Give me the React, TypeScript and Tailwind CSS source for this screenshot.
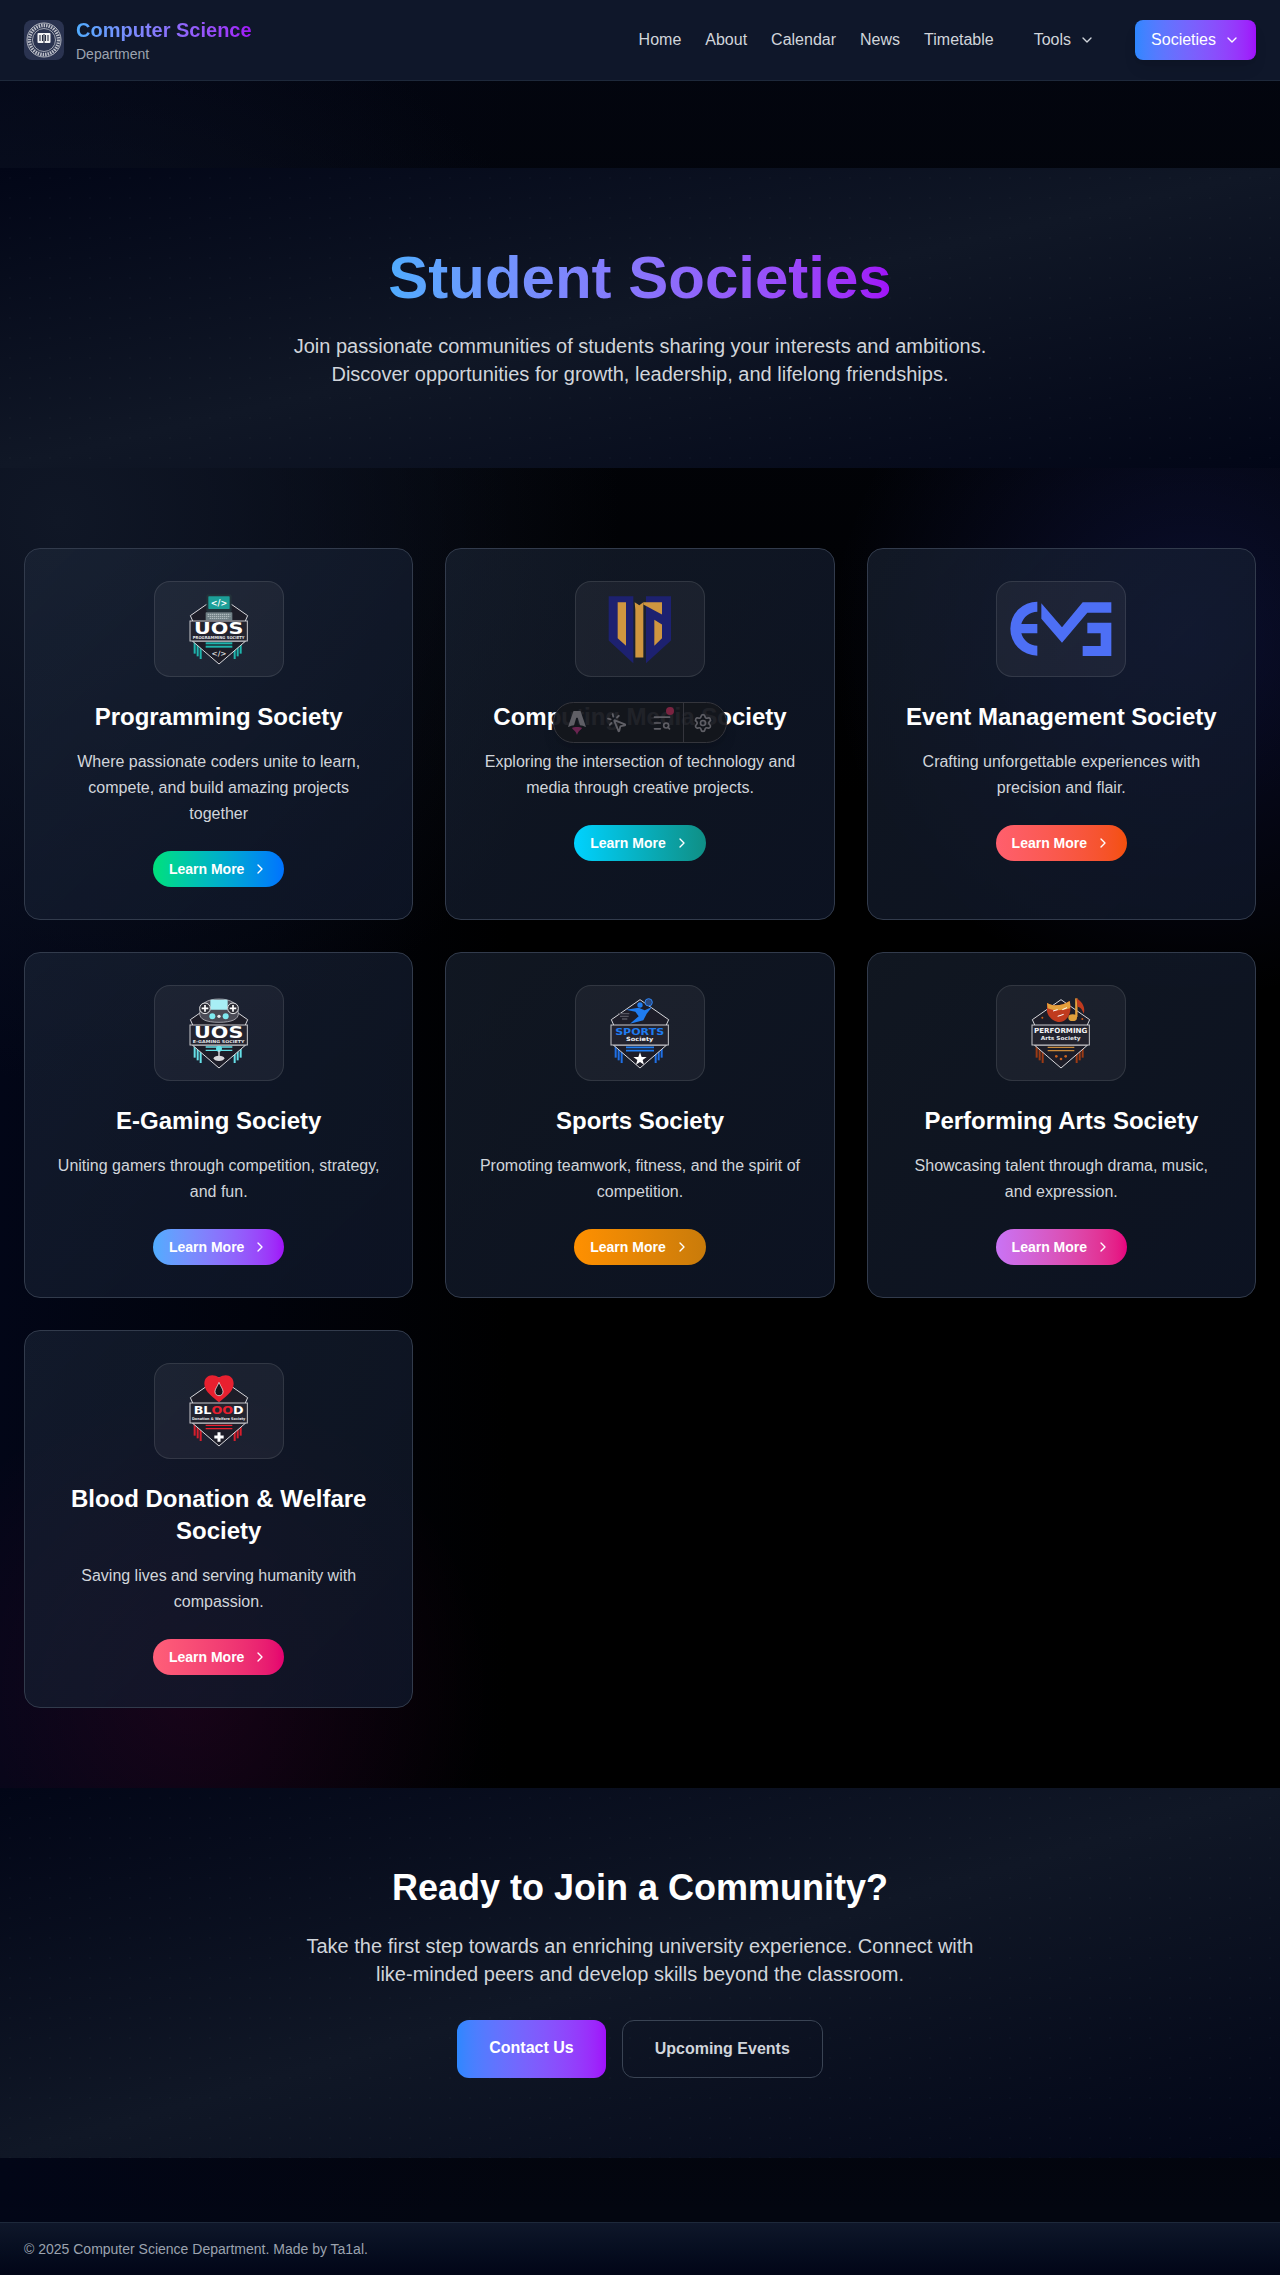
import type { ReactNode } from 'react'
import { ChevronDown, ChevronRight, MousePointerClick, TextSearch, Settings } from 'lucide-react'

// shared crest used by most society logos, drawn on a 180x216 grid
function Crest({ accent, top, banner, lower }: { accent: string; top: ReactNode; banner: ReactNode; lower: ReactNode }) {
  return (
    <svg width="60" height="72" viewBox="0 0 180 216" fontFamily="'DejaVu Sans', sans-serif">
      {[14, 23, 32].map((x, i) => (
        <g key={x}>
          <rect x={x} y="146" width="6" height={36 + i * 8} fill={accent} />
          <rect x={172 - x - 6} y="146" width="6" height={36 + i * 8} fill={accent} />
        </g>
      ))}
      <path d="M4 68 L90 8 L176 68 L168 86 H12 Z" fill="#1d1d28" stroke="#d8d8dc" strokeWidth="3" strokeLinejoin="round" />
      <path d="M10 144 H170 L90 213 Z" fill="#1d1d28" stroke="#d8d8dc" strokeWidth="3" strokeLinejoin="round" />
      {top}
      <rect x="3" y="84" width="172" height="60" fill="#23232e" stroke="#c8c8cc" strokeWidth="3" />
      {banner}
      {lower}
    </svg>
  )
}

function UosBanner({ label }: { label: string }) {
  return (
    <>
      <text x="89" y="124" textAnchor="middle" fontSize="48" fontWeight="700" textLength="148" lengthAdjust="spacingAndGlyphs" fill="#fff">UOS</text>
      <text x="89" y="139" textAnchor="middle" fontSize="12" fontWeight="700" textLength="155" lengthAdjust="spacingAndGlyphs" fill="#e5e7eb">{label}</text>
    </>
  )
}

function ProgrammingLogo() {
  return (
    <Crest
      accent="#1fb5ad"
      top={
        <>
          <rect x="52" y="4" width="76" height="54" rx="6" fill="#23323a" />
          <rect x="58" y="10" width="64" height="38" rx="2" fill="#1c9f98" />
          <text x="90" y="38" textAnchor="middle" fontSize="24" fontWeight="700" fill="#fff">{'</>'}</text>
          <rect x="50" y="58" width="80" height="24" rx="2" fill="#6f7f85" />
          <path d="M56 64 H124 M56 70 H124 M62 76 H118" stroke="#bcc7ca" strokeWidth="3" strokeDasharray="4 2" />
        </>
      }
      banner={<UosBanner label="PROGRAMMING SOCIETY" />}
      lower={
        <>
          <rect x="50" y="148" width="80" height="6" fill="#1fb5ad" />
          <rect x="50" y="158" width="80" height="6" fill="#1fb5ad" />
          <text x="90" y="190" textAnchor="middle" fontSize="22" fontWeight="700" fill="#d8d8dc">{'</>'}</text>
        </>
      }
    />
  )
}

function GamingLogo() {
  return (
    <Crest
      accent="#66e0e8"
      top={
        <>
          <path d="M32 50 C32 18 56 6 90 6 C124 6 148 18 148 50 C148 66 130 76 90 76 C50 76 32 66 32 50 Z" fill="#4a4a55" stroke="#cfcfd4" strokeWidth="2" />
          <rect x="64" y="8" width="52" height="30" rx="3" fill="#a8eef5" />
          <circle cx="48" cy="34" r="16" fill="#2a2a33" stroke="#e8e8ea" strokeWidth="3" />
          <circle cx="132" cy="34" r="16" fill="#2a2a33" stroke="#e8e8ea" strokeWidth="3" />
          <path d="M38 34 H58 M48 24 V44 M122 34 H142 M132 24 V44" stroke="#fff" strokeWidth="5" />
          <circle cx="70" cy="58" r="9" fill="#7fe9f0" />
          <circle cx="110" cy="58" r="9" fill="#7fe9f0" />
          <circle cx="90" cy="58" r="5" fill="#e8e8ea" />
        </>
      }
      banner={<UosBanner label="E-GAMING SOCIETY" />}
      lower={
        <>
          <path d="M50 150 H130 M50 160 H130" stroke="#66e0e8" strokeWidth="4" />
          <circle cx="90" cy="155" r="9" fill="#66e0e8" />
          <rect x="88" y="160" width="4" height="20" fill="#e8e8ea" />
          <ellipse cx="90" cy="184" rx="16" ry="8" fill="#d8d8dc" />
        </>
      }
    />
  )
}

function SportsLogo() {
  return (
    <Crest
      accent="#1f6fe5"
      top={
        <>
          <path d="M48 38 L86 32 L104 40 L126 30 L110 50 L100 70 L60 80 L86 58 L76 44 Z" fill="#1f7cf0" />
          <circle cx="90" cy="24" r="8" fill="#1f7cf0" />
          <circle cx="116" cy="16" r="11" fill="#2a4a80" stroke="#2f85f5" strokeWidth="3" />
          <path d="M24 50 H58 M30 58 H56 M36 66 H52" stroke="#55555f" strokeWidth="4" />
        </>
      }
      banner={
        <>
          <text x="89" y="114" textAnchor="middle" fontSize="28" fontWeight="700" textLength="147" lengthAdjust="spacingAndGlyphs" fill="#1f7cf0">SPORTS</text>
          <text x="89" y="133" textAnchor="middle" fontSize="17" fontWeight="700" textLength="82" lengthAdjust="spacingAndGlyphs" fill="#f3f4f6">Society</text>
        </>
      }
      lower={
        <>
          <path d="M48 151 H132 M48 161 H132" stroke="#1f7cf0" strokeWidth="5" />
          <path d="M90 166 L95 180 L110 180 L98 189 L102 203 L90 195 L78 203 L82 189 L70 180 L85 180 Z" fill="#fff" />
        </>
      }
    />
  )
}

function PerformingLogo() {
  return (
    <Crest
      accent="#9c3a14"
      top={
        <>
          <path d="M48 18 C68 30 96 26 116 12 C122 36 118 60 98 72 C78 82 54 66 48 44 Z" fill="#c03a1e" />
          <path d="M48 18 C68 30 96 26 116 12 C118 20 118 28 117 34 C94 42 66 42 50 34 Z" fill="#e3a03c" />
          <path d="M66 42 L80 38 M94 38 L108 32 M80 58 L98 52" stroke="#fff" strokeWidth="3" />
          <path d="M136 4 V60" stroke="#e3a03c" strokeWidth="7" />
          <ellipse cx="125" cy="62" rx="13" ry="10" fill="#e0a03c" />
          <path d="M136 4 C156 14 164 36 158 50 C154 38 148 30 140 30 Z" fill="#c03a1e" />
          <circle cx="34" cy="62" r="3" fill="#c9601e" />
          <circle cx="154" cy="66" r="3" fill="#c9601e" />
        </>
      }
      banner={
        <>
          <text x="89" y="108" textAnchor="middle" fontSize="21" fontWeight="700" textLength="160" lengthAdjust="spacingAndGlyphs" fill="#f3f4f6">PERFORMING</text>
          <text x="89" y="130" textAnchor="middle" fontSize="16" fontWeight="700" textLength="120" lengthAdjust="spacingAndGlyphs" fill="#e5e7eb">Arts Society</text>
        </>
      }
      lower={
        <>
          <path d="M50 151 H130 M50 161 H130" stroke="#c98a3a" strokeWidth="4" />
          <circle cx="76" cy="178" r="4" fill="#c9601e" />
          <circle cx="104" cy="178" r="4" fill="#c9601e" />
          <circle cx="90" cy="186" r="4" fill="#c9601e" />
        </>
      }
    />
  )
}

function BloodLogo() {
  return (
    <Crest
      accent="#d81e2c"
      top={
        <>
          <path d="M90 8 C70 -6 46 2 46 26 C46 52 76 68 90 82 C104 68 134 52 134 26 C134 2 110 -6 90 8 Z" fill="#e8202f" />
          <path d="M90 22 C84 36 78 42 78 50 C78 58 84 62 90 62 C96 62 102 58 102 50 C102 42 96 36 90 22 Z" fill="#15151c" stroke="#fff" strokeWidth="2" />
        </>
      }
      banner={
        <>
          <text x="89" y="117" textAnchor="middle" fontSize="34" fontWeight="700" textLength="150" lengthAdjust="spacingAndGlyphs" fill="#fff">
            BL<tspan fill="#e8202f">OO</tspan>D
          </text>
          <text x="89" y="135" textAnchor="middle" fontSize="11" fontWeight="700" textLength="160" lengthAdjust="spacingAndGlyphs" fill="#e5e7eb">Donation &amp; Welfare Society</text>
        </>
      }
      lower={
        <>
          <path d="M50 151 H130 M50 161 H130" stroke="#e8202f" strokeWidth="4" />
          <path d="M90 172 V200 M76 186 H104" stroke="#fff" strokeWidth="9" />
        </>
      }
    />
  )
}

function MediaLogo() {
  return (
    <svg width="64" height="69" viewBox="326 76 192 206">
      <path d="M328 79 H402 V280 L328 212 Z M440 79 H515 V212 L440 280 Z" fill="#1d2170" />
      <path d="M355 97 H380 V228 L355 205 Z" fill="#cf9640" />
      <path d="M406 97 L420 106 L432 97 V263 H408 V120 Z" fill="#cf9640" />
      <path d="M432 97 H488 V134 L432 104 Z" fill="#cf9640" />
      <path d="M465 150 L488 164 V205 L465 228 Z" fill="#cf9640" />
    </svg>
  )
}

function EventLogo() {
  return (
    <svg width="102" height="56" viewBox="88 93 306 168" fill="#4d6ff5">
      <path d="M170 95 A81 81 0 0 0 170 257 V227 A50 50 0 0 1 122 190 H170 V162 H122 A50 50 0 0 1 170 125 Z" />
      <path d="M182 100 L244 172 L306 97 H392 V128 H320 L244 218 L182 146 Z" />
      <path d="M320 158 H392 V258 H306 V228 H360 V190 H320 Z" />
    </svg>
  )
}

function DeptSeal() {
  return (
    <div className="flex h-10 w-10 items-center justify-center rounded-lg bg-[#2a3350]">
      <svg width="36" height="36" viewBox="0 0 36 36" fill="none">
        <circle cx="18" cy="18" r="17" stroke="#d6d8dd" strokeWidth="0.8" />
        <circle cx="18" cy="18" r="14.5" stroke="#e2e3e7" strokeWidth="3.4" strokeDasharray="1.5 1" opacity="0.8" />
        <circle cx="18" cy="18" r="11.5" stroke="#d6d8dd" strokeWidth="0.7" />
        <rect x="11.5" y="11" width="13" height="10" rx="1" fill="#f3f4f6" />
        <path d="M14 13 V19 M16.5 13 V19 M18 12 V21 M19.5 13 V19 M22 13 V19" stroke="#252b40" strokeWidth="1.1" />
      </svg>
    </div>
  )
}

type Society = { name: string; text: string; logo: ReactNode; btn: string }

const societies: Society[] = [
  { name: 'Programming Society', text: 'Where passionate coders unite to learn, compete, and build amazing projects together', logo: <ProgrammingLogo />, btn: 'from-[#00e07a] to-[#0072ff]' },
  { name: 'Computing Media Society', text: 'Exploring the intersection of technology and media through creative projects.', logo: <MediaLogo />, btn: 'from-[#00d2ff] to-[#0f8f85]' },
  { name: 'Event Management Society', text: 'Crafting unforgettable experiences with precision and flair.', logo: <EventLogo />, btn: 'from-[#ff5f6d] to-[#f4500b]' },
  { name: 'E-Gaming Society', text: 'Uniting gamers through competition, strategy, and fun.', logo: <GamingLogo />, btn: 'from-[#4facfe] to-[#a00ff8]' },
  { name: 'Sports Society', text: 'Promoting teamwork, fitness, and the spirit of competition.', logo: <SportsLogo />, btn: 'from-[#ff9000] to-[#c97b0a]' },
  { name: 'Performing Arts Society', text: 'Showcasing talent through drama, music, and expression.', logo: <PerformingLogo />, btn: 'from-[#c973f5] to-[#e6007e]' },
  { name: 'Blood Donation & Welfare Society', text: 'Saving lives and serving humanity with compassion.', logo: <BloodLogo />, btn: 'from-[#ff5f78] to-[#e5006f]' },
]

function SocietyCard({ s }: { s: Society }) {
  return (
    <div className="flex flex-col items-center rounded-2xl border border-[#323b4c] bg-linear-to-br from-[#1e293b]/55 to-[#0f172a]/80 p-8 text-center">
      <div className="mb-6 flex h-24 w-[130px] items-center justify-center rounded-2xl border border-white/10 bg-white/5">
        {s.logo}
      </div>
      <h3 className="mb-4 text-2xl font-bold text-white">{s.name}</h3>
      <p className="mb-6 leading-[26px] text-[#d1d5db]">{s.text}</p>
      <a className={`flex h-9 items-center gap-2 rounded-full bg-linear-to-r px-4 text-sm font-bold text-white ${s.btn}`}>
        Learn More
        <ChevronRight size={16} />
      </a>
    </div>
  )
}

function AstroMark() {
  return (
    <svg width="20" height="26" viewBox="0 0 20 26">
      <path d="M6.5 1 H13.5 L19 17 C17 16 14.5 15.4 13 15.2 L10.8 8 C10.6 7.5 9.4 7.5 9.2 8 L7 15.2 C5.5 15.4 3 16 1 17 Z" fill="#5f5f66" />
      <path d="M5 18 C7 16.8 13 16.8 15 18 C14 20 11 21 10 25 C9 21 6 20 5 18 Z" fill="#6a2450" />
    </svg>
  )
}

// the dev toolbar pill that floats over the second card
function DevToolbar() {
  return (
    <div className="absolute left-1/2 top-[702px] flex h-[41px] w-[174px] -translate-x-1/2 items-center rounded-full border border-[#34353c] bg-[#14161c]/95 text-[#5f5f66] shadow-lg">
      <div className="flex flex-1 items-center pl-[13px]">
        <AstroMark />
        <MousePointerClick size={22} className="ml-[19px]" />
        <div className="relative ml-[24px]">
          <TextSearch size={20} />
          <span className="absolute -right-0.5 -top-1.5 h-2 w-2 rounded-full bg-[#7a2340]" />
        </div>
      </div>
      <div className="flex h-full w-[43px] items-center justify-center border-l border-[#34353c] pr-1">
        <Settings size={20} />
      </div>
    </div>
  )
}

function Banner({ children }: { children: ReactNode }) {
  return (
    <section className="bg-[radial-gradient(rgba(255,255,255,0.015)_1px,transparent_1px),linear-gradient(to_bottom_right,#020617_0%,#101726_50%,#020617_100%)] bg-[size:20px_20px,100%_100%] py-20 text-center">
      {children}
    </section>
  )
}

export default function App() {
  return (
    <div className="relative min-h-[2275px] bg-[radial-gradient(circle_at_1190px_640px,rgba(60,80,255,0.17),transparent_360px),radial-gradient(circle_at_190px_1690px,rgba(255,0,128,0.09),transparent_300px),radial-gradient(circle_at_60px_520px,#101726,transparent_560px),linear-gradient(90deg,#020617,transparent_40%),linear-gradient(180deg,#030610_0%,#000_35%,#000_80%,#030610_97%)] [font-family:'Liberation_Sans',Arial,sans-serif]">
      <header className="flex h-[81px] items-center justify-between border-b border-[#1e293b] bg-[#0f172a] px-6">
        <div className="flex items-center gap-3">
          <DeptSeal />
          <div>
            <div className="bg-linear-to-r from-[#4facfe] to-[#a00ff8] bg-clip-text text-xl leading-7 font-bold text-transparent">Computer Science</div>
            <div className="text-sm leading-5 text-[#9ca3af]">Department</div>
          </div>
        </div>
        <nav className="flex items-center gap-6 text-[#d1d5db]">
          <a>Home</a>
          <a>About</a>
          <a>Calendar</a>
          <a>News</a>
          <a>Timetable</a>
          <button className="flex items-center gap-2 px-4 py-2">
            Tools <ChevronDown size={16} />
          </button>
          <button className="flex h-10 items-center gap-2 rounded-lg bg-linear-to-r from-[#2d87ff] to-[#a00ffa] px-4 text-white shadow-lg">
            Societies <ChevronDown size={16} />
          </button>
        </nav>
      </header>

      <main className="pt-[87px]">
        <Banner>
          <h1 className="mx-auto mb-6 w-fit bg-linear-to-r from-[#4facfe] to-[#a00ff8] bg-clip-text text-6xl font-bold text-transparent">Student Societies</h1>
          <p className="mx-auto max-w-3xl text-xl text-[#d1d5db]">
            Join passionate communities of students sharing your interests and ambitions. Discover opportunities for growth, leadership, and lifelong friendships.
          </p>
        </Banner>

        <section className="grid grid-cols-3 gap-8 px-6 py-20">
          {societies.map(s => <SocietyCard key={s.name} s={s} />)}
        </section>

        <Banner>
          <h2 className="mb-6 text-4xl font-bold text-white">Ready to Join a Community?</h2>
          <p className="mx-auto mb-8 max-w-2xl text-xl text-[#d1d5db]">
            Take the first step towards an enriching university experience. Connect with like-minded peers and develop skills beyond the classroom.
          </p>
          <div className="flex justify-center gap-4">
            <a className="rounded-xl bg-linear-to-r from-[#2d87ff] to-[#a00ffa] px-8 py-4 font-bold text-white">Contact Us</a>
            <a className="rounded-xl border border-[#3a4454] px-8 py-4 font-bold text-[#d1d5db]">Upcoming Events</a>
          </div>
        </Banner>
      </main>

      <footer className="mt-16 border-t border-[#1e293b] bg-linear-to-b from-[#0f172a] to-[#020617] px-6 py-4 text-sm text-[#9ca3af]">
        © 2025 Computer Science Department. Made by Ta1al.
      </footer>

      <DevToolbar />
    </div>
  )
}
